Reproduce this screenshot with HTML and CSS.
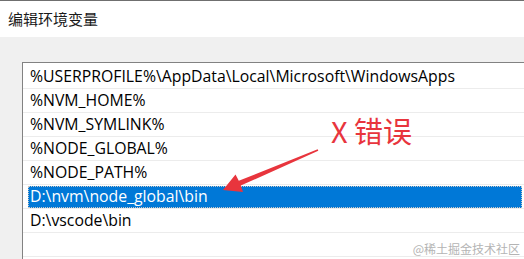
FILE: index.html
```html
<html>
<head>
  <meta charset="utf-8">
  <link rel="stylesheet" href="styles.css">
</head>
<body>
  <div class="titlebar">编辑环境变量</div>

  <div class="content">
    <div class="pathlist">
      <div class="row"><span class="item">%USERPROFILE%\AppData\Local\Microsoft\WindowsApps</span></div>
      <div class="row"><span class="item">%NVM_HOME%</span></div>
      <div class="row"><span class="item">%NVM_SYMLINK%</span></div>
      <div class="row"><span class="item">%NODE_GLOBAL%</span></div>
      <div class="row"><span class="item">%NODE_PATH%</span></div>
      <div class="row"><span class="item selected">D:\nvm\node_global\bin</span></div>
      <div class="row"><span class="item">D:\vscode\bin</span></div>
      <div class="row"><span class="item"></span></div>
    </div>
  </div>

  <!-- annotation drawn over the screenshot -->
  <div class="note">X 错误</div>
  <svg class="arrow" width="524" height="259" viewBox="0 0 524 259">
    <polygon points="223,190 243,192 240.8,185.6 318.3,150.7 317.7,149.3 238.8,180.8 235.5,174.5" fill="#e8353d"/>
  </svg>

  <div class="watermark">@稀土掘金技术社区</div>
</body>
</html>
```

FILE: styles.css
```css
body {
  margin: 0;
  width: 524px;
  height: 259px;
  overflow: hidden;
  position: relative;
  background-color: #f0f0f0;
  font-family: "Open Sans", "Noto Sans CJK SC", sans-serif;
  color: #000;
}
.titlebar {
  border-top: 1px solid #6f6f6f;
  background-color: #fff;
  height: 36px;
  line-height: 36px;
  padding-left: 8px;
  font-family: "Noto Sans CJK SC", sans-serif;
  font-size: 15px;
  color: #1a1a1a;
}
.content {
  padding: 25px 0 0 22px;
}
.pathlist {
  width: 501px;
  height: 195px;
  overflow: hidden;
  background-color: #fff;
  border-left: 1px solid #828282;
  border-top: 1px solid #828282;
  padding-top: 2px;
}
.row {
  height: 23px;
  border-bottom: 1px solid #ececec;
  display: flex;
}
.item {
  margin-left: 5px;
  padding-left: 2px;
  font-size: 15.8px;
  line-height: 23px;
  white-space: nowrap;
}
.item.selected {
  width: 492px;
  margin-top: 1px;
  height: 22px;
  line-height: 21px;
  background-color: #0078d7;
  color: #fff;
  outline: 1px dotted #c8c8c8;
  outline-offset: -1px;
}
.note {
  position: absolute;
  left: 331px;
  top: 112px;
  font-family: "Noto Sans CJK SC", sans-serif;
  font-size: 29px;
  line-height: 36px;
  color: #e8353d;
}
.arrow {
  position: absolute;
  left: 0;
  top: 0;
}
.watermark {
  position: absolute;
  right: 4px;
  bottom: 3px;
  font-family: "Noto Sans CJK SC", sans-serif;
  font-size: 12px;
  line-height: 14px;
  color: #b4b4b4;
}
```
